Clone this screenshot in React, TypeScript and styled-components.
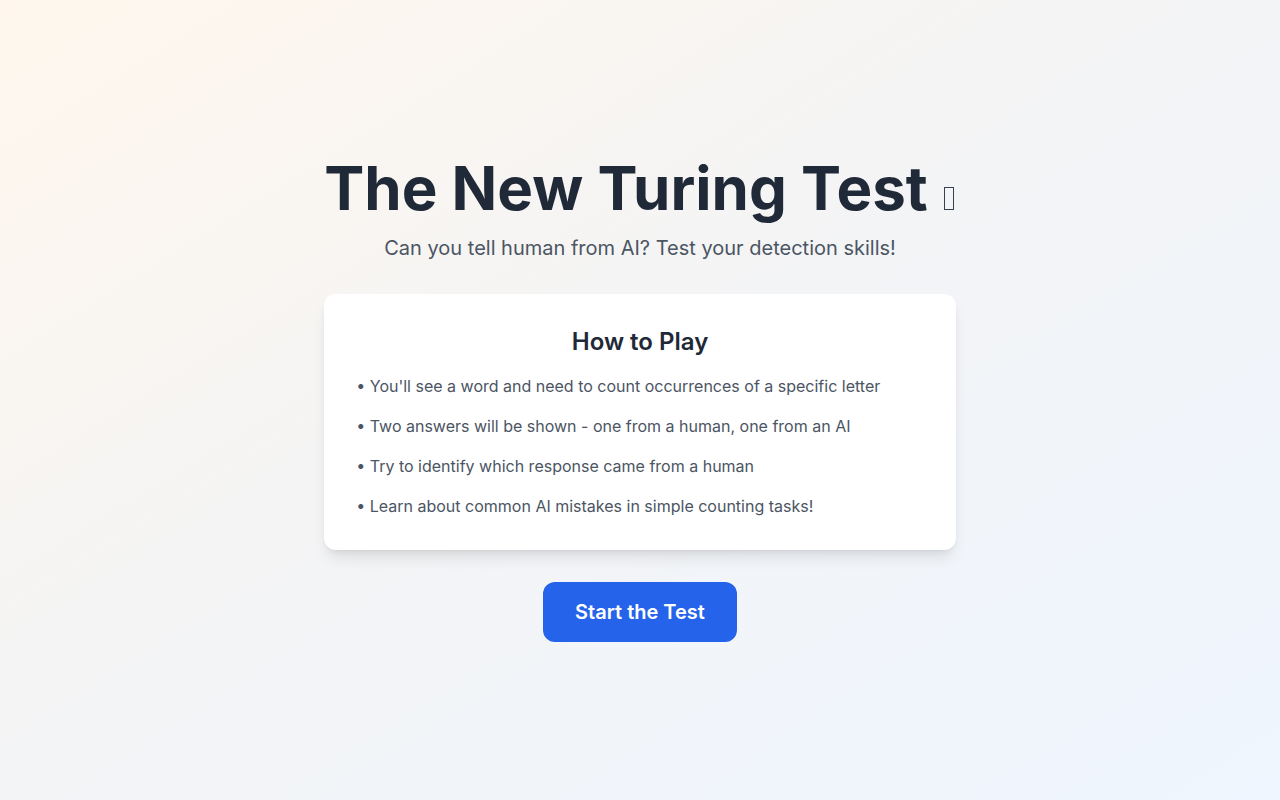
import styled, { createGlobalStyle } from 'styled-components'

const GlobalStyle = createGlobalStyle`
	* {
		box-sizing: border-box;
	}
	body {
		margin: 0;
		font-family: Inter, 'Noto Sans', sans-serif;
	}
`

const Page = styled.main`
	min-height: 100vh;
	display: flex;
	align-items: center;
	justify-content: center;
	background: linear-gradient(to bottom right, #fff7ed, #f3f4f6 50%, #eff6ff);
`

const Content = styled.div`
	width: fit-content;
	display: flex;
	flex-direction: column;
	align-items: center;
	text-align: center;
`

const Title = styled.h1`
	margin: 0 0 16px;
	font-size: 60px;
	line-height: 60px;
	font-weight: 700;
	color: #1f2937;
	white-space: nowrap;
`

// the emoji after the title shows as a missing-glyph box
const MissingGlyph = styled.span`
	display: inline-block;
	width: 10px;
	height: 23px;
	margin: 0 2px 0 16px;
	border: 1.5px solid #374151;
	vertical-align: baseline;
`

const Subtitle = styled.p`
	margin: 0 0 32px;
	font-size: 20px;
	line-height: 28px;
	color: #4b5563;
`

const Card = styled.section`
	align-self: stretch;
	background: #ffffff;
	border-radius: 12px;
	padding: 32px;
	box-shadow: 0 10px 15px -3px rgba(0, 0, 0, 0.1), 0 4px 6px -4px rgba(0, 0, 0, 0.1);
	margin-bottom: 32px;
`

const CardTitle = styled.h2`
	margin: 0 0 16px;
	font-size: 24px;
	line-height: 32px;
	font-weight: 600;
	color: #1f2937;
`

const RuleList = styled.ul`
	list-style: none;
	margin: 0;
	padding: 0;
	display: flex;
	flex-direction: column;
	gap: 16px;
	text-align: left;
`

const Rule = styled.li`
	font-size: 16px;
	line-height: 24px;
	color: #4b5563;
`

const StartButton = styled.button`
	border: none;
	cursor: pointer;
	background: #2563eb;
	color: #ffffff;
	font-family: inherit;
	font-size: 20px;
	line-height: 28px;
	font-weight: 600;
	padding: 16px 32px;
	border-radius: 12px;
	&:hover {
		background: #1d4ed8;
	}
`

const rules = [
	"You'll see a word and need to count occurrences of a specific letter",
	'Two answers will be shown - one from a human, one from an AI',
	'Try to identify which response came from a human',
	'Learn about common AI mistakes in simple counting tasks!',
]

const App = () => (
	<>
		<GlobalStyle />
		<Page>
			<Content>
				<Title>
					The New Turing Test
					<MissingGlyph role='img' aria-label='robot' />
				</Title>
				<Subtitle>Can you tell human from AI? Test your detection skills!</Subtitle>
				<Card>
					<CardTitle>How to Play</CardTitle>
					<RuleList>
						{rules.map(rule => (
							<Rule key={rule}>• {rule}</Rule>
						))}
					</RuleList>
				</Card>
				<StartButton>Start the Test</StartButton>
			</Content>
		</Page>
	</>
)

export default App
